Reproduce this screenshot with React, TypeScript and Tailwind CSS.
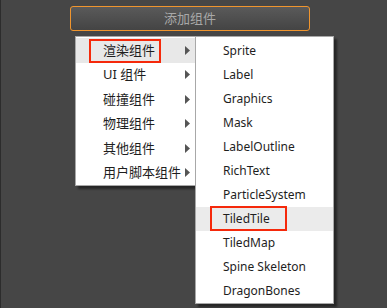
const mainItems = ['渲染组件', 'UI 组件', '碰撞组件', '物理组件', '其他组件', '用户脚本组件']
const subItems = [
  'Sprite',
  'Label',
  'Graphics',
  'Mask',
  'LabelOutline',
  'RichText',
  'ParticleSystem',
  'TiledTile',
  'TiledMap',
  'Spine Skeleton',
  'DragonBones',
]

const font = "font-['Segoe_UI','Noto_Sans','Noto_Sans_CJK_SC',sans-serif]"

function Arrow() {
  return (
    <svg width="5" height="9" viewBox="0 0 5 9" className="shrink-0">
      <path d="M0 0 L5 4.5 L0 9 Z" fill="#555" />
    </svg>
  )
}

export default function App() {
  return (
    <div className={`relative w-[387px] h-[308px] overflow-hidden bg-[#464646] border-l border-[#2c2c2c] ${font}`}>
      <div className="pt-[6px] pl-[69px]">
        <button
          type="button"
          className="flex h-[25px] w-[240px] items-center justify-center rounded-[3px] border border-[#f0952e] bg-gradient-to-b from-[#5a5a5a] to-[#444] text-[13px] text-[#a8a8a8]"
        >
          添加组件
        </button>
      </div>

      {/* main menu */}
      <div className="absolute left-[74px] top-[36px] w-[121px] border border-[#a8a8a8] bg-white pt-px shadow-[3px_3px_2px_rgba(0,0,0,0.45)]">
        {mainItems.map((item, i) => (
          <div
            key={item}
            className={`relative flex h-[24.5px] items-center justify-between pl-[27px] pr-[5px] text-[13px] text-[#1e1e1e] ${i === 0 ? 'bg-[#e8e8e8]' : ''}`}
          >
            <span>{item}</span>
            <Arrow />
            {i === 0 && (
              <div className="absolute left-[13px] top-px h-[24px] w-[72px] border-2 border-[#f5290b]" />
            )}
          </div>
        ))}
      </div>

      {/* submenu */}
      <div className="absolute left-[194px] top-[36px] w-[139px] border border-[#a8a8a8] bg-white pt-[2px] shadow-[3px_3px_2px_rgba(0,0,0,0.45)]">
        {subItems.map((item) => (
          <div
            key={item}
            className={`relative flex h-[24px] items-center pl-[27px] text-[12px] text-[#1e1e1e] ${item === 'TiledTile' ? 'bg-[#ebebeb]' : ''}`}
          >
            <span>{item}</span>
            {item === 'TiledTile' && (
              <div className="absolute left-[14px] top-[-1px] h-[25px] w-[77px] border-2 border-[#f5290b]" />
            )}
          </div>
        ))}
      </div>
    </div>
  )
}
